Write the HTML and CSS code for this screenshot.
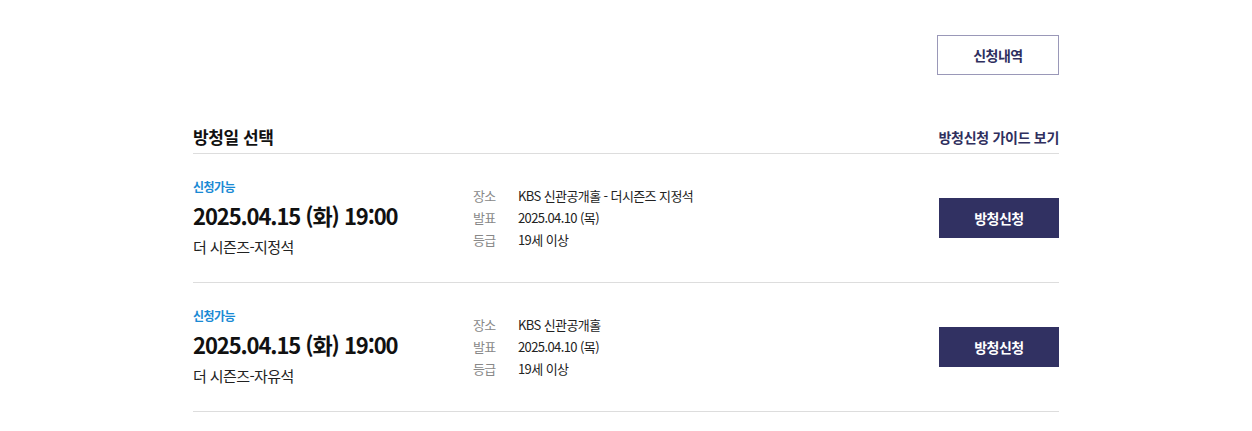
FILE: index.html
```html
<!DOCTYPE html>
<html lang="ko">
<head>
    <meta charset="UTF-8">
    <title>방청신청</title>
    <link rel="stylesheet" href="styles.css">
</head>
<body>
    <div class="wrap">
        <div class="top">
            <a class="btn-history" href="#">신청내역</a>
        </div>

        <div class="head">
            <h2 class="title">방청일 선택</h2>
            <a class="guide" href="#">방청신청 가이드 보기</a>
        </div>

        <ul class="list">
            <li class="item">
                <div class="when">
                    <span class="state">신청가능</span>
                    <strong class="date">2025.04.15 (화) 19:00</strong>
                    <span class="seat">더 시즌즈-지정석</span>
                </div>
                <dl class="info">
                    <dt>장소</dt><dd>KBS 신관공개홀 - 더시즌즈 지정석</dd>
                    <dt>발표</dt><dd>2025.04.10 (목)</dd>
                    <dt>등급</dt><dd>19세 이상</dd>
                </dl>
                <a class="btn-apply" href="#">방청신청</a>
            </li>
            <li class="item">
                <div class="when">
                    <span class="state">신청가능</span>
                    <strong class="date">2025.04.15 (화) 19:00</strong>
                    <span class="seat">더 시즌즈-자유석</span>
                </div>
                <dl class="info">
                    <dt>장소</dt><dd>KBS 신관공개홀</dd>
                    <dt>발표</dt><dd>2025.04.10 (목)</dd>
                    <dt>등급</dt><dd>19세 이상</dd>
                </dl>
                <a class="btn-apply" href="#">방청신청</a>
            </li>
        </ul>
    </div>
</body>
</html>
```

FILE: styles.css
```css
body {
    margin: 0;
    font-family: "Noto Sans CJK KR", "Noto Sans", sans-serif;
    color: #111;
    background: #fff;
}

a {
    text-decoration: none;
}

.wrap {
    width: 866px;
    margin: 0 auto;
}

/* top button */
.top {
    display: flex;
    justify-content: flex-end;
    padding-top: 35px;
}

.btn-history {
    display: flex;
    align-items: center;
    justify-content: center;
    width: 120px;
    height: 38px;
    border: 1px solid #9a98b8;
    color: #2f2f5e;
    font-size: 14px;
    font-weight: 700;
    letter-spacing: -0.5px;
}

/* section header */
.head {
    display: flex;
    justify-content: space-between;
    align-items: center;
    margin-top: 50px;
    padding-bottom: 4px;
    border-bottom: 1px solid #ddd;
}

.title {
    margin: 0;
    font-size: 17px;
    line-height: 24px;
    font-weight: 700;
    letter-spacing: -0.4px;
    color: #111;
}

.guide {
    font-size: 14px;
    font-weight: 700;
    color: #2f2f5e;
    letter-spacing: -0.3px;
}

/* list */
.list {
    list-style: none;
    margin: 0;
    padding: 0;
}

.item {
    display: flex;
    align-items: center;
    height: 128px;
    border-bottom: 1px solid #ddd;
}

.when {
    display: flex;
    flex-direction: column;
    width: 280px;
}

.state {
    font-size: 12px;
    line-height: 18px;
    font-weight: 700;
    color: #1a8ad4;
    letter-spacing: -0.5px;
}

.date {
    margin-top: 3px;
    font-size: 22px;
    line-height: 32px;
    font-weight: 700;
    letter-spacing: -1.1px;
    color: #111;
}

.seat {
    margin-top: 5px;
    font-size: 15px;
    line-height: 22px;
    letter-spacing: -0.6px;
    color: #222;
}

.info {
    display: grid;
    grid-template-columns: 45px auto;
    margin: 0;
    flex: 1;
    font-size: 13px;
    line-height: 22px;
    letter-spacing: -0.6px;
}

.info dt {
    color: #888;
}

.info dd {
    margin: 0;
    color: #222;
}

.btn-apply {
    display: flex;
    align-items: center;
    justify-content: center;
    width: 120px;
    height: 40px;
    background: #313162;
    color: #fff;
    font-size: 14px;
    font-weight: 700;
    letter-spacing: -0.5px;
}
```
